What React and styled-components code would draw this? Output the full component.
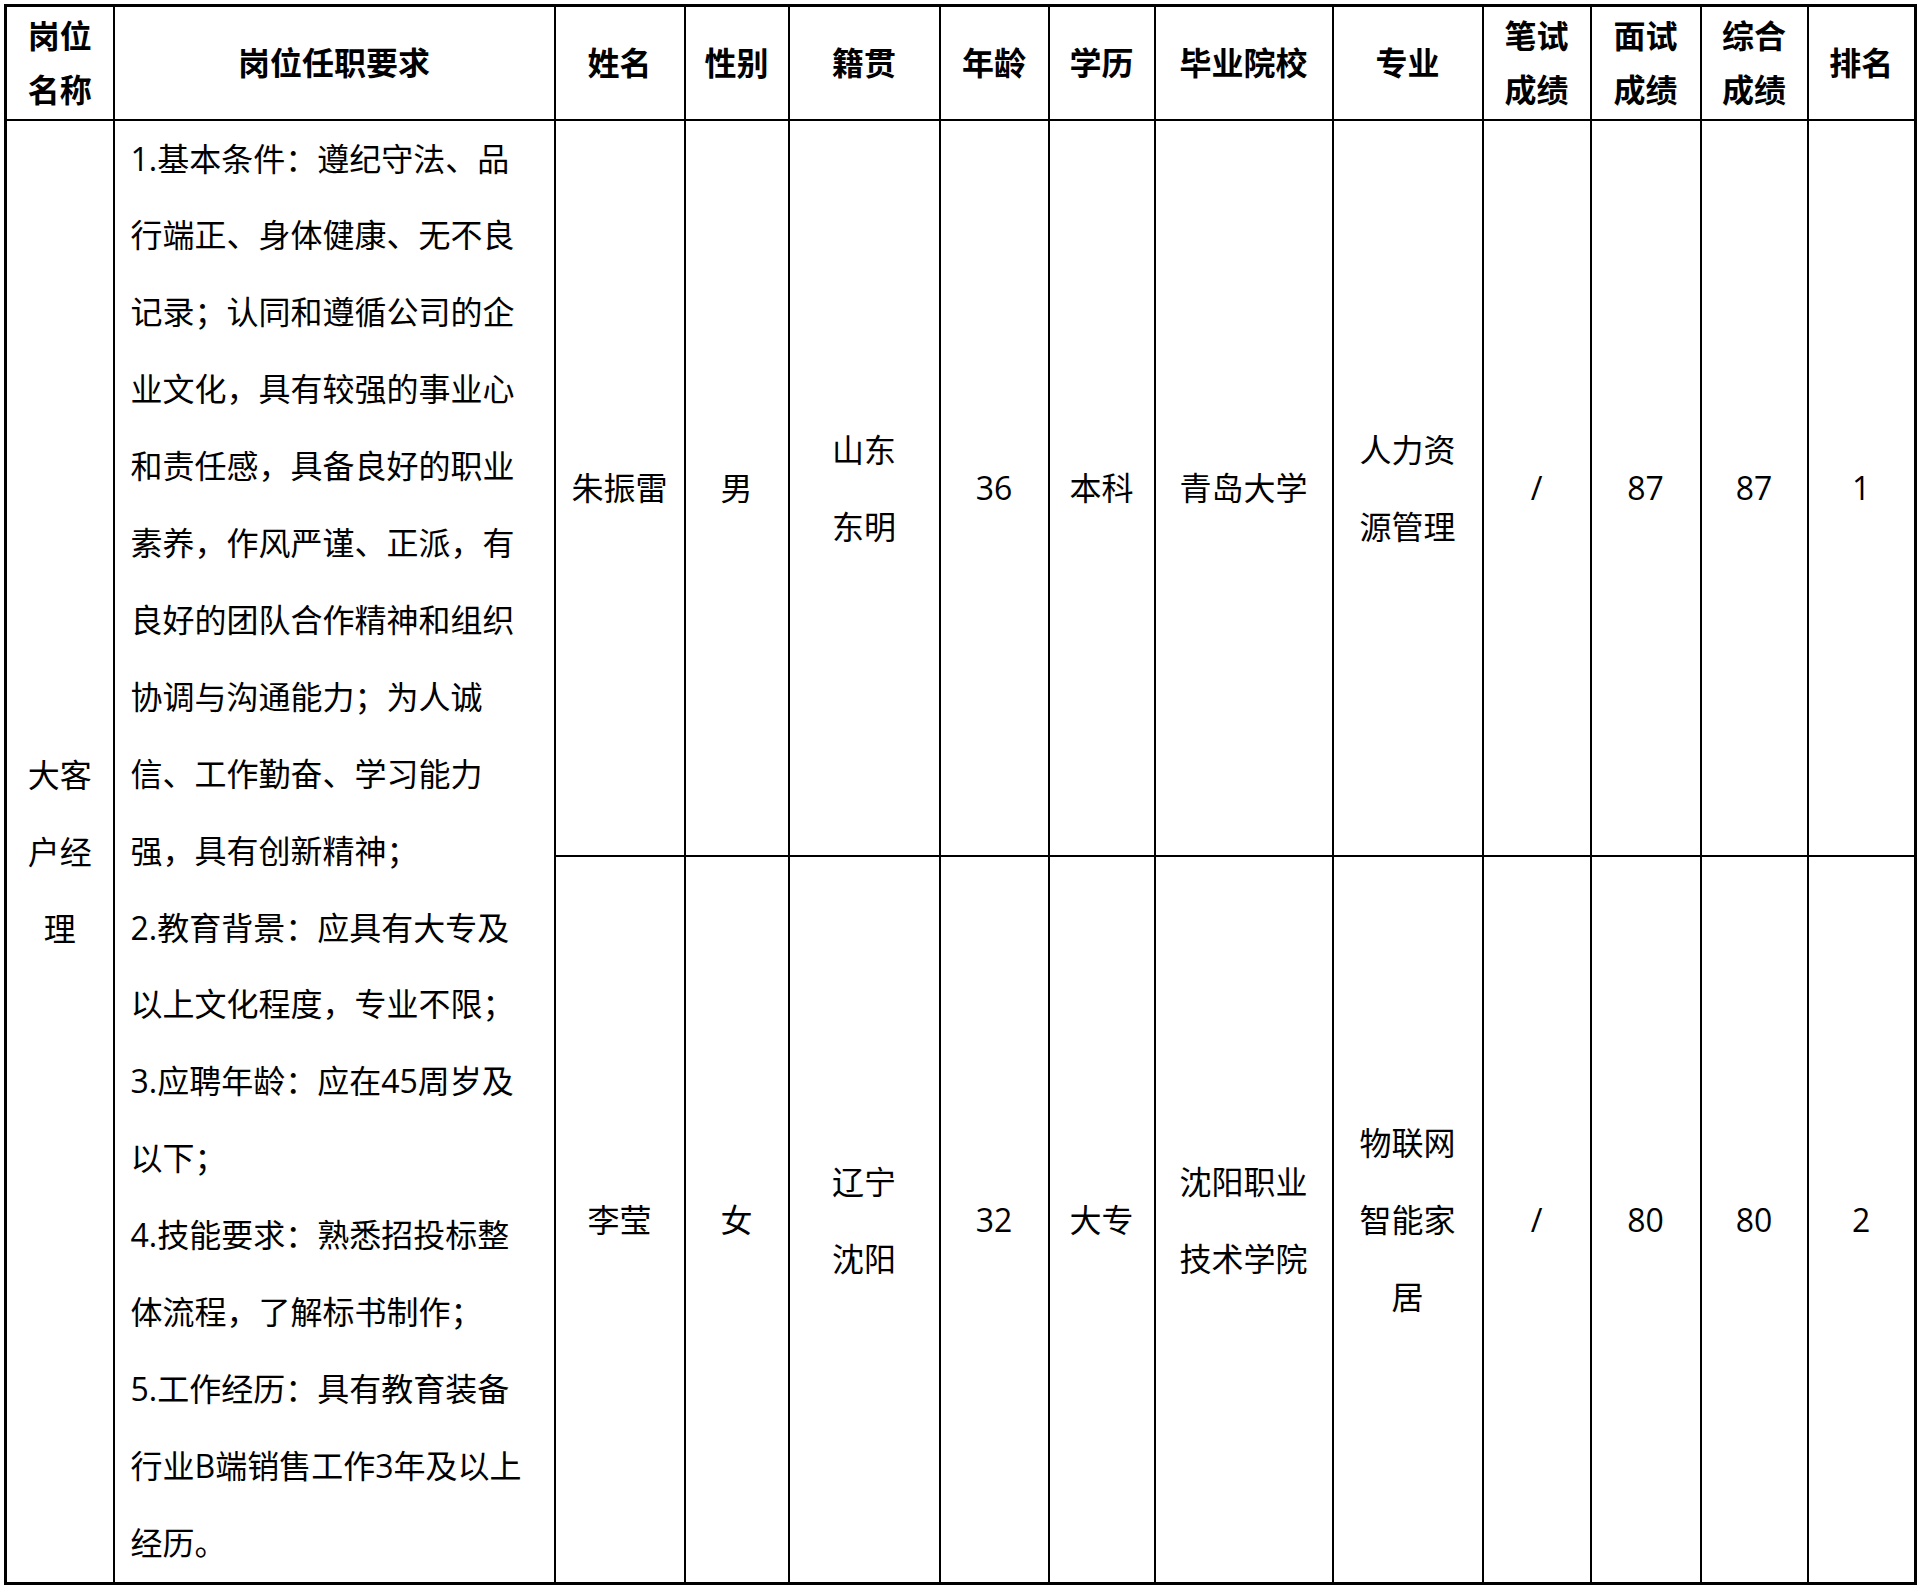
import styled, { createGlobalStyle } from "styled-components";

const GlobalStyle = createGlobalStyle`
  body {
    margin: 0;
    background: #ffffff;
    color: #000000;
    font-family: "Open Sans", "Noto Sans CJK SC", sans-serif;
  }
`;

const columnWidths = [108, 441, 130, 104, 151, 109, 106, 178, 150, 108, 110, 107, 108];

const headers = [
  ["岗位", "名称"],
  ["岗位任职要求"],
  ["姓名"],
  ["性别"],
  ["籍贯"],
  ["年龄"],
  ["学历"],
  ["毕业院校"],
  ["专业"],
  ["笔试", "成绩"],
  ["面试", "成绩"],
  ["综合", "成绩"],
  ["排名"],
];

const requirements = [
  "1.基本条件：遵纪守法、品",
  "行端正、身体健康、无不良",
  "记录；认同和遵循公司的企",
  "业文化，具有较强的事业心",
  "和责任感，具备良好的职业",
  "素养，作风严谨、正派，有",
  "良好的团队合作精神和组织",
  "协调与沟通能力；为人诚",
  "信、工作勤奋、学习能力",
  "强，具有创新精神；",
  "2.教育背景：应具有大专及",
  "以上文化程度，专业不限；",
  "3.应聘年龄：应在45周岁及",
  "以下；",
  "4.技能要求：熟悉招投标整",
  "体流程，了解标书制作；",
  "5.工作经历：具有教育装备",
  "行业B端销售工作3年及以上",
  "经历。",
];

const candidates = [
  {
    height: 736,
    cells: [
      ["朱振雷"],
      ["男"],
      ["山东", "东明"],
      ["36"],
      ["本科"],
      ["青岛大学"],
      ["人力资", "源管理"],
      ["/"],
      ["87"],
      ["87"],
      ["1"],
    ],
  },
  {
    height: 726,
    cells: [
      ["李莹"],
      ["女"],
      ["辽宁", "沈阳"],
      ["32"],
      ["大专"],
      ["沈阳职业", "技术学院"],
      ["物联网", "智能家", "居"],
      ["/"],
      ["80"],
      ["80"],
      ["2"],
    ],
  },
];

const App = () => {
  return (
    <SPage>
      <GlobalStyle />
      <STable>
        <colgroup>
          {columnWidths.map((w, i) => (
            <col key={i} style={{ width: w }} />
          ))}
        </colgroup>
        <thead>
          <SRow height={114}>
            {headers.map((lines, i) => (
              <SHeadCell key={i}>
                {lines.map((line) => (
                  <SLine key={line}>{line}</SLine>
                ))}
              </SHeadCell>
            ))}
          </SRow>
        </thead>
        <tbody>
          {candidates.map((row, r) => (
            <SRow key={r} height={row.height}>
              {r === 0 && (
                <>
                  <SCell rowSpan={2}>
                    <SLine>大客</SLine>
                    <SLine>户经</SLine>
                    <SLine>理</SLine>
                  </SCell>
                  <SRequirementCell rowSpan={2}>
                    {requirements.map((line) => (
                      <SLine key={line}>{line}</SLine>
                    ))}
                  </SRequirementCell>
                </>
              )}
              {row.cells.map((lines, i) => (
                <SCell key={i}>
                  {lines.map((line) => (
                    <SLine key={line}>{line}</SLine>
                  ))}
                </SCell>
              ))}
            </SRow>
          ))}
        </tbody>
      </STable>
    </SPage>
  );
};

const SPage = styled.div`
  padding: 4px 0 0 4px;
`;

const STable = styled.table`
  border-collapse: collapse;
  table-layout: fixed;
  width: 1910px;
  border: 3px solid #000;
`;

const SRow = styled.tr`
  height: ${(props) => props.height}px;
`;

const SHeadCell = styled.th`
  border: 2px solid #000;
  padding: 0;
  font-size: 32px;
  font-weight: 700;
  line-height: 54px;
  text-align: center;
  vertical-align: middle;
`;

const SCell = styled.td`
  border: 2px solid #000;
  padding: 0;
  font-size: 32px;
  font-weight: 400;
  line-height: 77px;
  text-align: center;
  vertical-align: middle;
`;

const SRequirementCell = styled(SCell)`
  text-align: left;
  padding-left: 16px;
  line-height: 76.9px;
`;

const SLine = styled.div`
  white-space: nowrap;
`;

export default App;
